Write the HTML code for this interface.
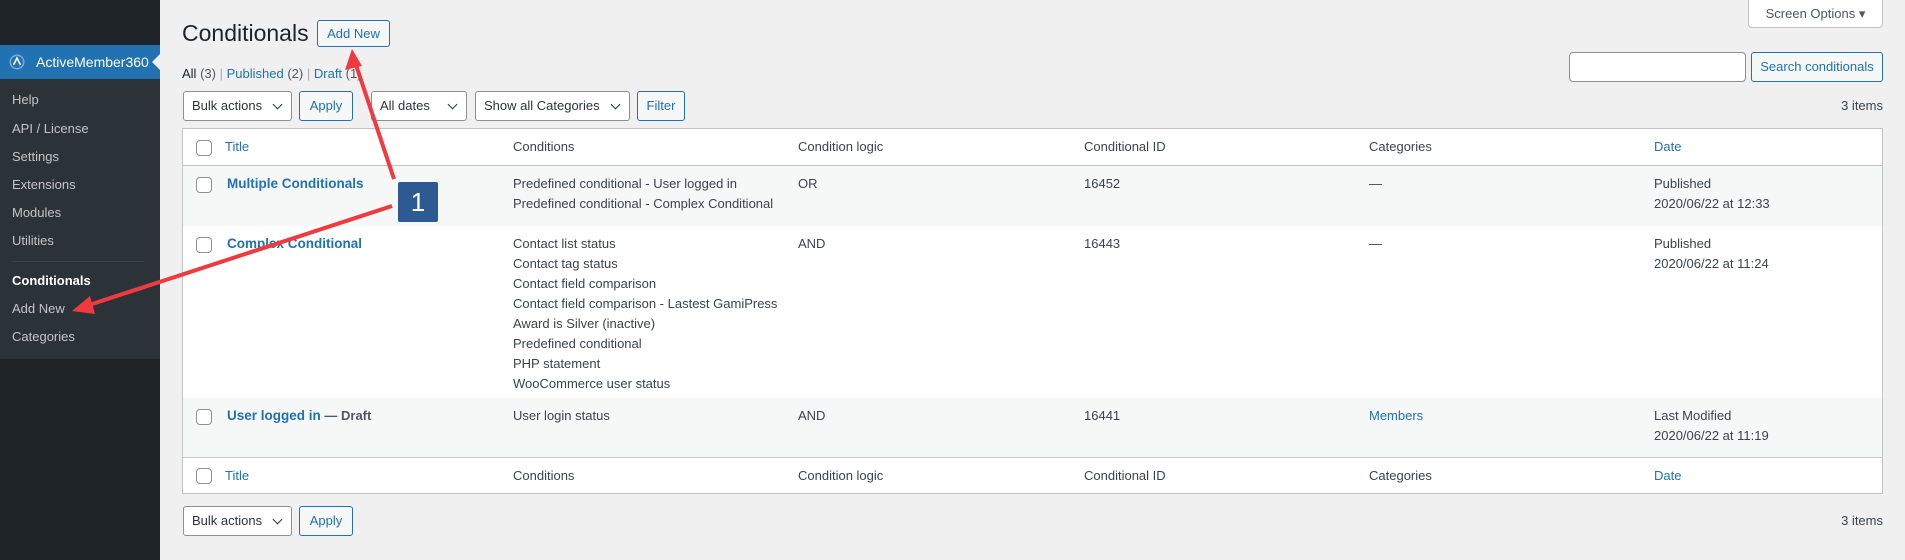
<!DOCTYPE html>
<html><head><meta charset="utf-8"><style>
*{box-sizing:border-box;margin:0;padding:0}
body{width:1905px;height:560px;background:#f0f0f1;font-family:"Liberation Sans",sans-serif;font-size:13px;color:#3c434a;position:relative;overflow:hidden}
.a{position:absolute;white-space:nowrap}
#side{position:absolute;left:0;top:0;width:160px;height:560px;background:#1d2327}
#blue{position:absolute;left:0;top:45px;width:160px;height:34px;background:#2271b1;color:#fff;font-size:14px}
#sub{position:absolute;left:0;top:79px;width:160px;height:280px;background:#2c3338}
.mi{position:absolute;left:12px;color:#f0f0f1cc;font-size:13px;color:#c3c4c7}
.btn{position:absolute;height:30px;border:1px solid #2271b1;border-radius:3px;background:#f6f7f7;color:#2271b1;line-height:28px;text-align:center;font-size:13px}
.sel{position:absolute;height:30px;border:1px solid #8c8f94;border-radius:3px;background:#fff;color:#2c3338;line-height:28px;padding-left:8px;font-size:13px}
.sel:after{content:"";position:absolute;right:10px;top:9px;width:6px;height:6px;border-right:1.5px solid #2c3338;border-bottom:1.5px solid #2c3338;transform:rotate(45deg)}
#tbl{position:absolute;left:182px;top:128px;width:1701px;height:366px;background:#fff;border:1px solid #c3c4c7}
.row{position:absolute;left:0;width:1699px}
.cb{position:absolute;left:13px;width:16px;height:16px;border:1px solid #8c8f94;border-radius:4px;background:#fff}
.c{position:absolute;line-height:20px}
.lk{color:#2271b1}
.tl{color:#2271b1;font-weight:bold;font-size:13.5px}
</style></head><body>
<div id="side">
 <div id="blue"><svg class="a" style="left:9px;top:9px" width="16" height="16" viewBox="0 0 16 16"><circle cx="8" cy="8" r="7.5" fill="#72aee6"/><circle cx="8" cy="8" r="6" fill="#2271b1"/><path d="M4.5 11 L8 4 L11.5 11" stroke="#fff" stroke-width="1.6" fill="none"/></svg><span class="a" style="left:36px;top:9px">ActiveMember360</span>
 <div class="a" style="right:0;top:9px;width:0;height:0;border:8px solid transparent;border-right-color:#f0f0f1"></div></div>
 <div id="sub"></div>
 <div class="mi a" style="top:92px">Help</div>
 <div class="mi a" style="top:121px">API / License</div>
 <div class="mi a" style="top:149px">Settings</div>
 <div class="mi a" style="top:177px">Extensions</div>
 <div class="mi a" style="top:205px">Modules</div>
 <div class="mi a" style="top:233px">Utilities</div>
 <div class="a" style="left:12px;top:261px;width:132px;height:1px;background:#3c434a"></div>
 <div class="mi a" style="top:273px;color:#fff;font-weight:bold">Conditionals</div>
 <div class="mi a" style="top:301px">Add New</div>
 <div class="mi a" style="top:329px">Categories</div>
</div>

<div class="a" style="left:182px;top:20px;font-size:23px;color:#1d2327">Conditionals</div>
<div class="btn" style="left:317px;top:20px;width:73px;height:27px;line-height:25px">Add New</div>
<div class="a" style="left:1748px;top:-1px;width:135px;height:29px;background:#fff;border:1px solid #c3c4c7;border-radius:0 0 4px 4px;line-height:27px;text-align:center;color:#50575e">Screen Options ▾</div>

<div class="a" style="left:182px;top:66px"><b style="color:#1d2327;font-weight:normal">All</b> <span style="color:#50575e">(3)</span> <span style="color:#a7aaad">|</span> <span class="lk">Published</span> <span style="color:#50575e">(2)</span> <span style="color:#a7aaad">|</span> <span class="lk">Draft</span> <span style="color:#50575e">(1)</span></div>
<div class="a" style="left:1569px;top:52px;width:177px;height:30px;background:#fff;border:1px solid #8c8f94;border-radius:4px"></div>
<div class="btn" style="left:1751px;top:52px;width:132px">Search conditionals</div>

<div class="sel" style="left:183px;top:91px;width:109px">Bulk actions</div>
<div class="btn" style="left:299px;top:91px;width:54px">Apply</div>
<div class="sel" style="left:371px;top:91px;width:96px">All dates</div>
<div class="sel" style="left:475px;top:91px;width:155px">Show all Categories</div>
<div class="btn" style="left:637px;top:91px;width:48px">Filter</div>
<div class="a" style="right:22px;top:98px;color:#3c434a">3 items</div>

<div id="tbl">
 <div class="row" style="top:0;height:37px;border-bottom:1px solid #c3c4c7">
  <div class="cb" style="top:11px"></div>
  <div class="c lk" style="left:42px;top:8px">Title</div>
  <div class="c" style="left:330px;top:8px">Conditions</div>
  <div class="c" style="left:615px;top:8px">Condition logic</div>
  <div class="c" style="left:901px;top:8px">Conditional ID</div>
  <div class="c" style="left:1186px;top:8px">Categories</div>
  <div class="c lk" style="left:1471px;top:8px">Date</div>
 </div>
 <div class="row" style="top:37px;height:60px;background:#f6f7f7">
  <div class="cb" style="top:11px"></div>
  <div class="c tl" style="left:44px;top:8px">Multiple Conditionals</div>
  <div class="c" style="left:330px;top:8px">Predefined conditional - User logged in<br>Predefined conditional - Complex Conditional</div>
  <div class="c" style="left:615px;top:8px">OR</div>
  <div class="c" style="left:901px;top:8px">16452</div>
  <div class="c" style="left:1186px;top:8px">—</div>
  <div class="c" style="left:1471px;top:8px">Published<br>2020/06/22 at 12:33</div>
 </div>
 <div class="row" style="top:97px;height:172px;background:#fff">
  <div class="cb" style="top:11px"></div>
  <div class="c tl" style="left:44px;top:8px">Complex Conditional</div>
  <div class="c" style="left:330px;top:8px">Contact list status<br>Contact tag status<br>Contact field comparison<br>Contact field comparison - Lastest GamiPress<br>Award is Silver (inactive)<br>Predefined conditional<br>PHP statement<br>WooCommerce user status</div>
  <div class="c" style="left:615px;top:8px">AND</div>
  <div class="c" style="left:901px;top:8px">16443</div>
  <div class="c" style="left:1186px;top:8px">—</div>
  <div class="c" style="left:1471px;top:8px">Published<br>2020/06/22 at 11:24</div>
 </div>
 <div class="row" style="top:269px;height:60px;background:#f6f7f7;border-bottom:1px solid #c3c4c7">
  <div class="cb" style="top:11px"></div>
  <div class="c" style="left:44px;top:8px"><span class="tl">User logged in</span> <b style="color:#50575e">— Draft</b></div>
  <div class="c" style="left:330px;top:8px">User login status</div>
  <div class="c" style="left:615px;top:8px">AND</div>
  <div class="c" style="left:901px;top:8px">16441</div>
  <div class="c lk" style="left:1186px;top:8px">Members</div>
  <div class="c" style="left:1471px;top:8px">Last Modified<br>2020/06/22 at 11:19</div>
 </div>
 <div class="row" style="top:329px;height:36px">
  <div class="cb" style="top:10px"></div>
  <div class="c lk" style="left:42px;top:8px">Title</div>
  <div class="c" style="left:330px;top:8px">Conditions</div>
  <div class="c" style="left:615px;top:8px">Condition logic</div>
  <div class="c" style="left:901px;top:8px">Conditional ID</div>
  <div class="c" style="left:1186px;top:8px">Categories</div>
  <div class="c lk" style="left:1471px;top:8px">Date</div>
 </div>
</div>

<div class="sel" style="left:183px;top:506px;width:109px">Bulk actions</div>
<div class="btn" style="left:299px;top:506px;width:54px">Apply</div>
<div class="a" style="right:22px;top:513px">3 items</div>

<svg class="a" style="left:0;top:0" width="1905" height="560">
 <line x1="394" y1="179" x2="355" y2="62" stroke="#ef3b3f" stroke-width="4"/>
 <polygon points="352,49 345,70 362,66" fill="#ef3b3f"/>
 <line x1="392" y1="206" x2="86" y2="306" stroke="#ef3b3f" stroke-width="4"/>
 <polygon points="72,311 90,296 95,314" fill="#ef3b3f"/>
</svg>
<div class="a" style="left:398px;top:182px;width:40px;height:40px;background:#2d5a92;border-radius:2px;color:#fff;font-size:26px;line-height:40px;text-align:center">1</div>
</body></html>
